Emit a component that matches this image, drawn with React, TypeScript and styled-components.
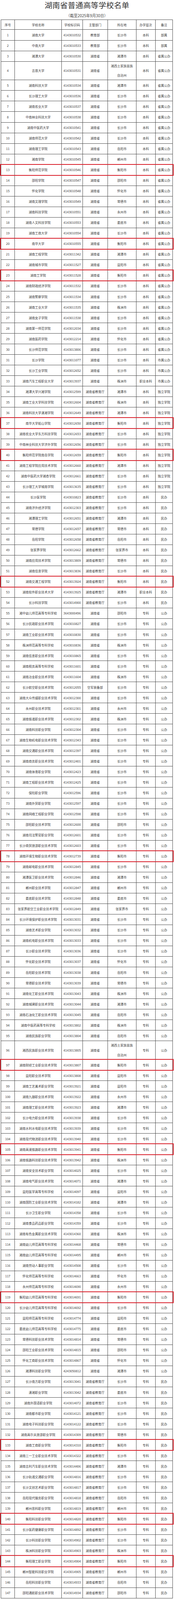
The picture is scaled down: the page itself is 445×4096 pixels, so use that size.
import React from "react";
import styled, { createGlobalStyle } from "styled-components";

const Global = createGlobalStyle`
  html, body { margin: 0; padding: 0; background: #ffffff; }
  body { font-family: "Noto Sans CJK SC", "Noto Sans", sans-serif; }
`;

const Page = styled.div`
  width: 445px;
  background: #ffffff;
  color: #3a3a3a;
`;

const Title = styled.h1`
  margin: 0;
  height: 26.8px;
  line-height: 26.8px;
  text-align: center;
  font-size: 19.6px;
  font-weight: 400;
  color: #333333;
  letter-spacing: 0.1px;
`;

const Subtitle = styled.div`
  padding-top: 3px;
  height: 20px;
  line-height: 20px;
  text-align: center;
  font-size: 9.8px;
  color: #444444;
`;

const Table = styled.div`
  margin-left: 1.8px;
  width: 440.4px;
  border-top: 1px solid #4a4a4a;
  border-left: 1px solid #4a4a4a;
  box-sizing: border-box;
`;

const COLS = "35.2px 120.2px 53.7px 63.8px 73px 49px 44.5px";

const Row = styled.div<{ $tall?: boolean; $mark?: boolean; $head?: boolean }>`
  display: grid;
  grid-template-columns: ${COLS};
  height: ${(p) => (p.$head ? 25.7 : p.$tall ? 47.8 : 27.04)}px;
  position: relative;
  ${(p) =>
    p.$mark
      ? `
    &::after {
      content: "";
      position: absolute;
      top: -2px;
      bottom: -1px;
      left: -2.8px;
      right: -1.8px;
      border: 2px solid #d91f2a;
      pointer-events: none;
      z-index: 2;
    }
  `
      : ""}
`;

const Cell = styled.div<{ $tall?: boolean }>`
  display: flex;
  align-items: center;
  justify-content: center;
  box-sizing: border-box;
  border-right: 1px solid #4a4a4a;
  border-bottom: 1px solid #4a4a4a;
  font-size: 8px;
  color: #3a3a3a;
  text-align: center;
  white-space: pre-line;
  line-height: ${(p) => (p.$tall ? "24.3px" : "normal")};
  overflow: hidden;
`;

type Group = { dept: string; level: string; note: string; text: string };

const groups: Group[] = [
  {
    dept: "教育部",
    level: "本科",
    note: "部属",
    text: `湖南大学 4143010532 长沙市
中南大学 4143010533 长沙市`,
  },
  {
    dept: "湖南省",
    level: "本科",
    note: "省属公办",
    text: `湘潭大学 4143010530 湘潭市
吉首大学 4143010531 湘西土家族苗族/自治州
湖南科技大学 4143010534 湘潭市
长沙理工大学 4143010536 长沙市
湖南农业大学 4143010537 长沙市
中南林业科技大学 4143010538 长沙市
湖南中医药大学 4143010541 长沙市
湖南师范大学 4143010542 长沙市
湖南理工学院 4143010543 岳阳市
湘南学院 4143010545 郴州市
衡阳师范学院 4143010546 衡阳市
邵阳学院 4143010547 邵阳市
怀化学院 4143010548 怀化市
湖南文理学院 4143010549 常德市
湖南科技学院 4143010551 永州市
湖南人文科技学院 4143010553 娄底市
湖南工商大学 4143010554 长沙市
南华大学 4143010555 衡阳市
湖南工程学院 4143011342 湘潭市
湖南城市学院 4143011527 益阳市
湖南工学院 4143011528 衡阳市
湖南财政经济学院 4143011532 长沙市
湖南警察学院 4143011534 长沙市
湖南工业大学 4143011535 株洲市
湖南女子学院 4143011538 长沙市
湖南第一师范学院 4143012034 长沙市
湖南医药学院 4143012214 怀化市
长沙师范学院 4143013806 长沙市`,
  },
  {
    dept: "湖南省",
    level: "本科",
    note: "市属公办",
    text: `长沙学院 4143011077 长沙市
长沙工业学院 4143012652 长沙市
湖南汽车工程职业大学 4143013937 株洲市 职业本科`,
  },
  {
    dept: "湖南省教育厅",
    level: "本科",
    note: "独立学院",
    text: `湘潭大学兴湘学院 4143012599 湘潭市
湖南工业大学科技学院 4143012604 株洲市
湖南科技大学潇湘学院 4143012649 湘潭市
南华大学船山学院 4143012650 衡阳市
湖南农业大学东方科技学院 4143012653 长沙市
中南林业科技大学涉外学院 4143012656 长沙市
衡阳师范学院南岳学院 4143012659 衡阳市
湖南工程学院应用技术学院 4143012660 湘潭市
湖南中医药大学湘杏学院 4143012661 长沙市
长沙理工大学城南学院 4143013635 长沙市`,
  },
  {
    dept: "湖南省教育厅",
    level: "本科",
    note: "民办",
    text: `长沙医学院 4143010823 长沙市
湖南涉外经济学院 4143012303 长沙市
湘潭理工学院 4143012651 湘潭市
常德学院 4143012657 常德市
岳阳学院 4143012658 岳阳市
张家界学院 4143012662 张家界市
湖南应用技术学院 4143013809 常德市
湖南信息学院 4143013836 长沙市
湖南交通工程学院 4143013924 衡阳市
湖南软件职业技术大学 4143013925 湘潭市 职业本科
长沙科技学院 4143014900 长沙市`,
  },
  {
    dept: "湖南省",
    level: "专科",
    note: "公办",
    text: `湘中幼儿师范高等专科学校 3643000496 邵阳市
长沙民政职业技术学院 4143010827 长沙市
湖南工业职业技术学院 4143010830 长沙市
株洲师范高等专科学校 4143010836 株洲市
湖南信息职业技术学院 4143010865 长沙市
湖南税务高等专科学校 4143011601 长沙市
湖南冶金职业技术学院 4143011604 株洲市
长沙航空职业技术学院 4143012055 长沙市 专科 空军装备部
湖南大众传媒职业技术学院 4143012300 长沙市
永州职业技术学院 4143012301 永州市
湖南铁道职业技术学院 4143012302 株洲市
湖南科技职业学院 4143012304 长沙市
湖南生物机电职业技术学院 4143012343 长沙市
湖南交通职业技术学院 4143012397 长沙市
湖南商务职业技术学院 4143012401 长沙市
湖南体育职业学院 4143012423 长沙市
湖南工程职业技术学院 4143012425 长沙市
保险职业学院 4143012596 长沙市
湖南外贸职业学院 4143012597 长沙市
湖南网络工程职业学院 4143012598 长沙市
邵阳职业技术学院 4143012600 邵阳市
湖南司法警官职业学院 4143012601 长沙市
长沙商贸旅游职业技术学院 4143012603 长沙市
湖南环境生物职业技术学院 4143012739 衡阳市
湖南邮电职业技术学院 4143012845 长沙市
湘潭医卫职业技术学院 4143012846 湘潭市
郴州职业技术学院 4143012847 郴州市
娄底职业技术学院 4143012848 娄底市
张家界航空工业职业技术学院 4143012849 张家界市
长沙环境保护职业技术学院 4143013031 长沙市
湖南艺术职业学院 4143013032 长沙市
湖南机电职业技术学院 4143013033 长沙市
长沙职业技术学院 4143013036 长沙市
怀化职业技术学院 4143013037 怀化市
岳阳职业技术学院 4143013038 岳阳市
常德职业技术学院 4143013039 常德市
湖南化工职业技术学院 4143013043 株洲市
湖南城建职业技术学院 4143013044 湘潭市
湖南石油化工职业技术学院 4143013045 岳阳市
湖南中医药高等专科学校 4143013802 株洲市
湖南民族职业学院 4143013804 岳阳市
湘西民族职业技术学院 4143013805 湘西土家族苗族/自治州
湖南财经工业职业技术学院 4143013807 衡阳市
益阳职业技术学院 4143013808 益阳市
湖南工艺美术职业学院 4143013921 益阳市
湖南九嶷职业技术学院 4143013922 永州市
湖南理工职业技术学院 4143013923 湘潭市
长沙电力职业技术学院 4143013938 长沙市
湖南水利水电职业技术学院 4143013939 长沙市
湖南现代物流职业技术学院 4143013940 长沙市
湖南高速铁路职业技术学院 4143013941 衡阳市
湖南铁路科技职业技术学院 4143013942 株洲市
湖南安全技术职业学院 4143014025 长沙市
湖南电气职业技术学院 4143014071 湘潭市
益阳医学高等专科学校 4143014097 益阳市
湖南国防工业职业技术学院 4143014182 湘潭市
长沙卫生职业学院 4143014358 长沙市
湖南食品药品职业学院 4143014359 长沙市
湖南有色金属职业技术学院 4143014360 株洲市
湖南幼儿师范高等专科学校 4143014468 常德市
湘南幼儿师范高等专科学校 4143014495 郴州市
湖南劳动人事职业学院 4143014508 长沙市
怀化师范高等专科学校 4143014663 怀化市
永州师范高等专科学校 4143014690 永州市
衡阳幼儿师范高等专科学校 4143014691 衡阳市
长沙幼儿师范高等专科学校 4143014692 长沙市
益阳师范高等专科学校 4143014774 益阳市
娄底幼儿师范高等专科学校 4143014775 娄底市
常德科技职业技术学院 4143014814 常德市
邵阳工业职业技术学院 4143014815 邵阳市
怀化工商职业技术学院 4143014867 怀化市
湘潭科技职业学院 4243050812 湘潭市`,
  },
  {
    dept: "湖南省教育厅",
    level: "专科",
    note: "民办",
    text: `长沙南方职业学院 4143013041 长沙市
潇湘职业学院 4143013042 娄底市
湖南外国语职业学院 4143014072 长沙市
湖南都市职业学院 4143014121 长沙市
湖南电子科技职业学院 4143014122 长沙市
湖南高尔夫旅游职业学院 4143014309 常德市
湖南工商职业学院 4143014310 衡阳市
湖南三一工业职业技术学院 4143014322 长沙市
湖南吉利汽车职业技术学院 4143014406 湘潭市
长沙轨道交通职业学院 4143014816 长沙市
长沙文创艺术职业学院 4143014817 长沙市
岳阳现代服务职业学院 4143014818 岳阳市
郴州思科职业学院 4143014819 郴州市
衡阳科技职业学院 4143014820 衡阳市
长沙医药健康职业学院 4143014892 长沙市
长沙科技职业学院 4143014902 长沙市
株洲科技职业学院 4143014903 株洲市
衡阳理工职业学院 4143014904 衡阳市
郴州智能科技职业学院 4143014905 郴州市
岳阳科技职业学院 4143014933 岳阳市
邵阳通航职业技术学院 4143014934 邵阳市`,
  },
];

type School = {
  name: string;
  code: string;
  dept: string;
  city: string;
  level: string;
  note: string;
};

const schools: School[] = groups.flatMap((g) =>
  g.text.split("\n").map((line) => {
    const t = line.trim().split(" ");
    return {
      name: t[0],
      code: t[1],
      city: t[2].replace("/", "\n"),
      level: t[3] ?? g.level,
      dept: t[4] ?? g.dept,
      note: g.note,
    };
  })
);

const headers = ["序号", "学校名称", "学校标识码", "主管部门", "所在地", "办学层次", "备注"];

export default function App() {
  return (
    <Page>
      <Global />
      <Title>湖南省普通高等学校名单</Title>
      <Subtitle>（截至2025年9月30日）</Subtitle>
      <Table>
        <Row $head>
          {headers.map((h) => (
            <Cell key={h}>{h}</Cell>
          ))}
        </Row>
        {schools.map((s, i) => {
          const tall = s.city.includes("\n");
          return (
            <Row key={s.code + i} $tall={tall} $mark={s.city === "衡阳市"}>
              <Cell>{i + 1}</Cell>
              <Cell>{s.name}</Cell>
              <Cell>{s.code}</Cell>
              <Cell>{s.dept}</Cell>
              <Cell $tall={tall}>{s.city}</Cell>
              <Cell>{s.level}</Cell>
              <Cell>{s.note}</Cell>
            </Row>
          );
        })}
      </Table>
    </Page>
  );
}
